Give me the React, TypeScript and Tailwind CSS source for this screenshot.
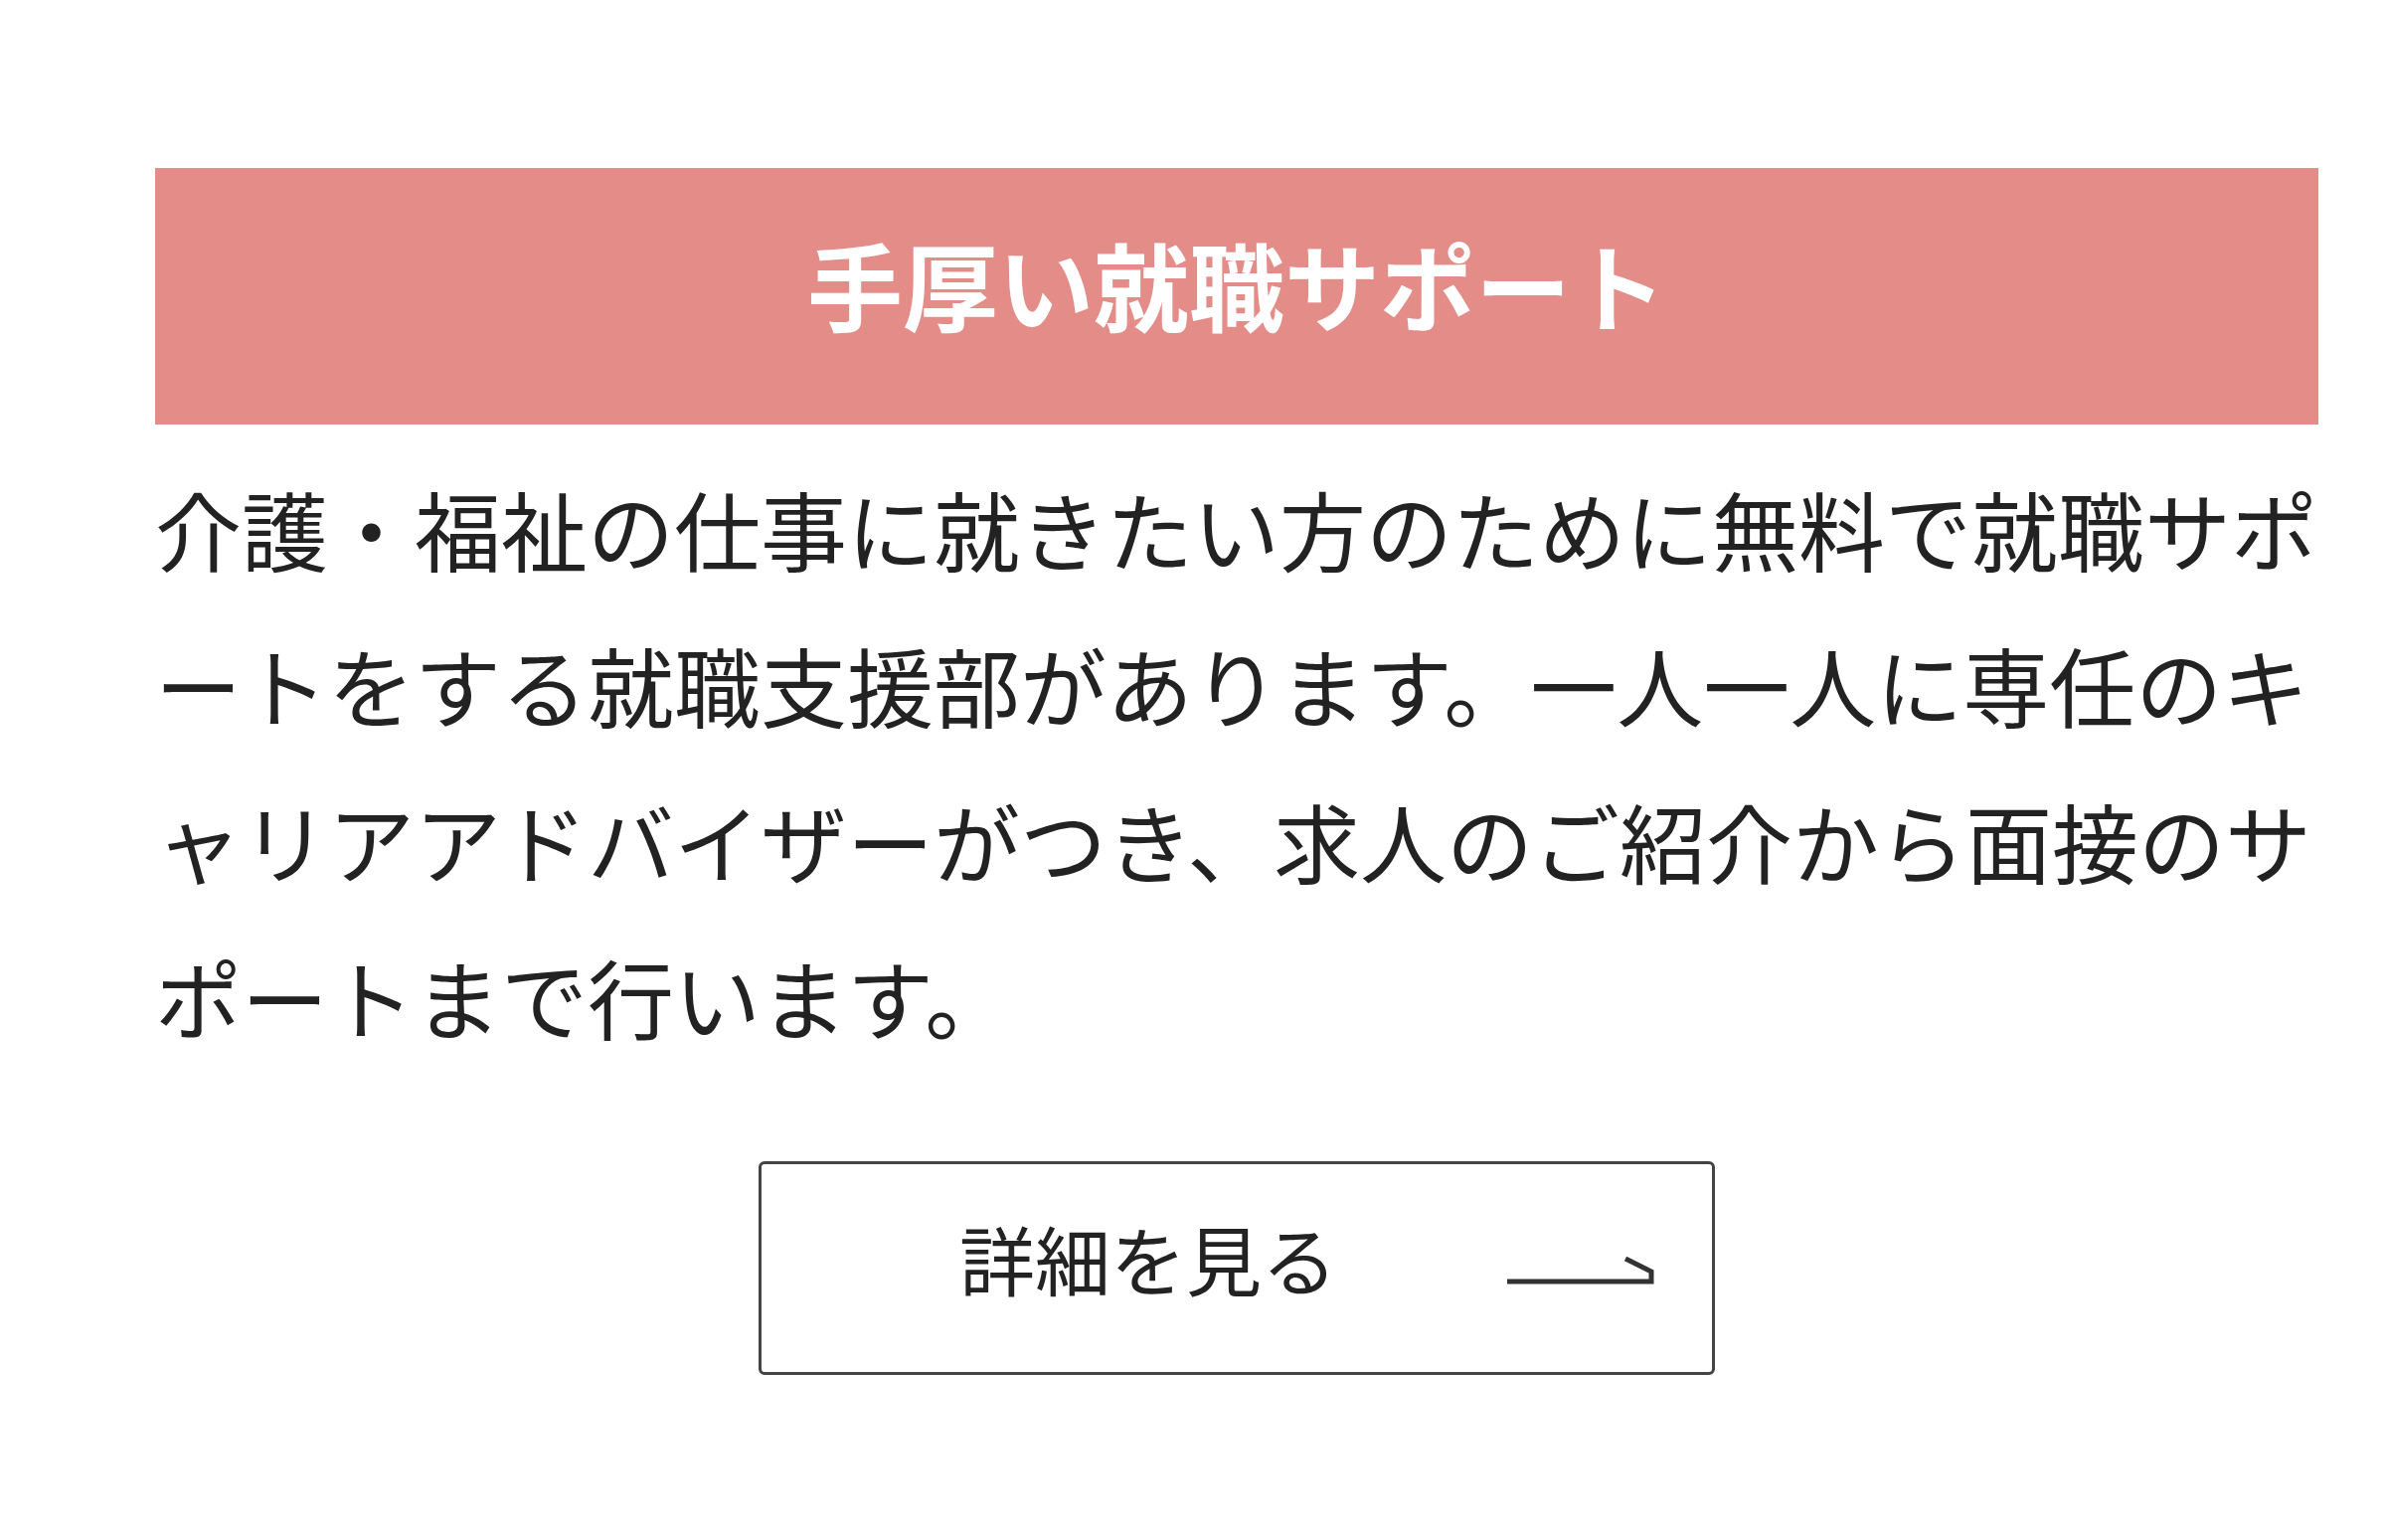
import React from "react";

const jp = "font-['Noto_Sans_CJK_JP','Noto_Sans',sans-serif]";

const ArrowRight = () => (
  <svg width="150" height="30" viewBox="0 0 150 30" fill="none" className="shrink-0 mt-[6px]">
    <path d="M2 25 H147 V15 L121 2" stroke="#333" strokeWidth="5" strokeLinejoin="miter" />
  </svg>
);

const App = () => {
  return (
    <div className={`min-h-[1549px] bg-white ${jp}`}>
      <section className="ml-[156px] w-[2176px] pt-[169px]">
        {/* 見出し */}
        <div className="bg-[#e48c88] pt-[47px] pb-[73px] text-center">
          <h2 className="text-[96px] leading-[138px] font-bold text-white">手厚い就職サポート</h2>
        </div>

        {/* 本文 */}
        <p className="mt-[26px] text-[87px] leading-[157px] text-[#222] [line-break:anywhere]">
          介護・福祉の仕事に就きたい方のために無料で就職サポートをする就職支援部があります。一人一人に専任のキャリアアドバイザーがつき、求人のご紹介から面接のサポートまで行います。
        </p>

        {/* ボタン */}
        <div className="mt-[87px] flex justify-center">
          <a
            href="#"
            className="flex items-center justify-between w-[962px] h-[215px] border-[3px] border-[#444] rounded-[6px] pl-[199px] pr-[58px] text-[#222]"
          >
            <span className="text-[76px] mb-[22px]">詳細を見る</span>
            <ArrowRight />
          </a>
        </div>
      </section>
    </div>
  );
};

export default App;
